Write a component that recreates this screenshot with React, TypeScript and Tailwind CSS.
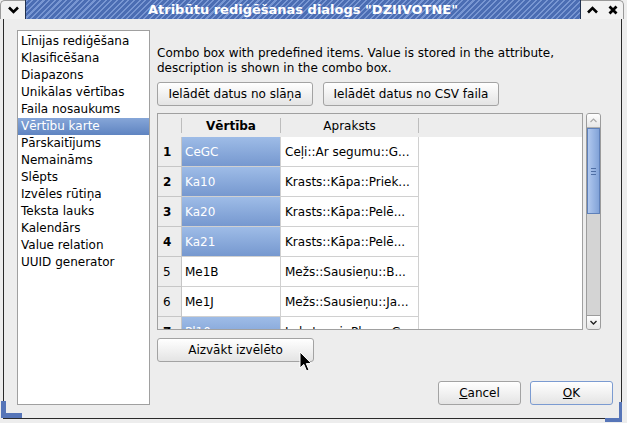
import React from "react";

const kinds = [
  "Līnijas rediģēšana",
  "Klasificēšana",
  "Diapazons",
  "Unikālas vērtības",
  "Faila nosaukums",
  "Vērtību karte",
  "Pārskaitījums",
  "Nemaināms",
  "Slēpts",
  "Izvēles rūtiņa",
  "Teksta lauks",
  "Kalendārs",
  "Value relation",
  "UUID generator",
];

const rows = [
  { n: 1, value: "CeGC", desc: "Ceļi::Ar segumu::G...", sel: true },
  { n: 2, value: "Ka10", desc: "Krasts::Kāpa::Priek...", sel: true },
  { n: 3, value: "Ka20", desc: "Krasts::Kāpa::Pelē...", sel: true },
  { n: 4, value: "Ka21", desc: "Krasts::Kāpa::Pelē...", sel: true },
  { n: 5, value: "Me1B", desc: "Mežs::Sausieņu::B...", sel: false },
  { n: 6, value: "Me1J", desc: "Mežs::Sausieņu::Ja...", sel: false },
  { n: 7, value: "Pl10", desc: "Lakstaugi::Plava::G...", sel: true },
];

function GtkButton({
  children,
  className = "",
  focused = false,
}: {
  children: React.ReactNode;
  className?: string;
  focused?: boolean;
}) {
  return (
    <div
      className={`flex items-center justify-center rounded-[3px] border bg-gradient-to-b from-white to-[#e4e4e4] text-[12px] text-black ${
        focused ? "border-[#7b9bd1]" : "border-[#a3a3a3]"
      } ${className}`}
    >
      {children}
    </div>
  );
}

function TitleBar() {
  return (
    <div className="flex h-[19px] shrink-0">
      <div className="flex w-[25px] items-center justify-center rounded-tl-[5px] border-l border-t border-[#9a9a9a] bg-[#f2f2f2]">
        <svg width="11" height="8" viewBox="0 0 11 8">
          <path d="M1 1.5 L5.5 6 L10 1.5" fill="none" stroke="#000" strokeWidth="2.6" />
        </svg>
      </div>
      <div className="flex flex-1 items-center justify-center border-x border-[#22324f] bg-[repeating-linear-gradient(135deg,#7896d2_0px,#7896d2_1.5px,#4b6db3_1.5px,#4b6db3_4px)]">
        <span className="font-['DejaVu_Sans'] text-[13px] font-bold text-white">
          Atribūtu rediģēšanas dialogs "DZIIVOTNE"
        </span>
      </div>
      <div className="flex w-[22px] items-center justify-center border-t border-[#9a9a9a] bg-[#f2f2f2]">
        <svg width="11" height="8" viewBox="0 0 11 8">
          <path d="M1 6.5 L5.5 2 L10 6.5" fill="none" stroke="#000" strokeWidth="2.6" />
        </svg>
      </div>
      <div className="flex w-[21px] items-center justify-center rounded-tr-[5px] border-r border-t border-[#9a9a9a] bg-[#f2f2f2]">
        <svg width="10" height="10" viewBox="0 0 10 10">
          <path d="M1.5 1.5 L8.5 8.5 M8.5 1.5 L1.5 8.5" stroke="#000" strokeWidth="2.8" />
        </svg>
      </div>
      <div className="w-[3px]" />
    </div>
  );
}

function KindList() {
  return (
    <div className="mt-[11px] h-[375px] w-[133px] shrink-0 border border-[#a0a0a0] bg-white pt-[2px]">
      {kinds.map((k) => {
        const active = k === "Vērtību karte";
        return (
          <div
            key={k}
            className={`h-[17px] pl-[3px] text-[12px] leading-[17px] ${
              active ? "bg-gradient-to-b from-[#86a6d8] to-[#5f84c1] text-white" : "text-black"
            }`}
          >
            {k}
          </div>
        );
      })}
    </div>
  );
}

function ScrollBar() {
  return (
    <div className="ml-[3px] flex h-[217px] w-[15px] flex-col overflow-hidden rounded-[3px] border border-[#9c9c9c] bg-[#d4d4d4]">
      <div className="flex h-[14px] items-center justify-center border-b border-[#b0b0b0] bg-gradient-to-b from-white to-[#e6e6e6]">
        <svg width="7" height="5" viewBox="0 0 7 5">
          <path d="M0.5 4 L3.5 1 L6.5 4" fill="none" stroke="#aaa" strokeWidth="1.2" />
        </svg>
      </div>
      <div className="flex h-[86px] items-center justify-center border border-[#5e80b9] bg-gradient-to-r from-[#b0c8ee] to-[#82a3d8]">
        <div className="flex w-[5px] flex-col gap-[2px]">
          <div className="h-px bg-[#4e6ea4]" />
          <div className="h-px bg-[#4e6ea4]" />
          <div className="h-px bg-[#4e6ea4]" />
        </div>
      </div>
      <div className="flex-1" />
      <div className="flex h-[14px] items-center justify-center border-t border-[#9c9c9c] bg-gradient-to-b from-white to-[#e6e6e6]">
        <svg width="7" height="5" viewBox="0 0 7 5">
          <path d="M0.5 1 L3.5 4 L6.5 1" fill="none" stroke="#222" strokeWidth="1.4" />
        </svg>
      </div>
    </div>
  );
}

function ValueTable() {
  return (
    <div className="flex">
      <div className="h-[217px] w-[426px] overflow-hidden border border-[#a0a0a0] bg-white">
        <div className="flex h-[23px] bg-[#ededed]">
          <div className="flex w-[24px] items-center justify-end py-[4px]">
            <div className="h-full w-px bg-[#bdbdbd]" />
          </div>
          <div className="flex w-[99px] items-center py-[4px]">
            <span className="flex-1 text-center text-[12px] font-bold">Vērtība</span>
            <div className="h-full w-px bg-[#bdbdbd]" />
          </div>
          <div className="flex w-[138px] items-center py-[4px]">
            <span className="flex-1 text-center text-[12px]">Apraksts</span>
            <div className="h-full w-px bg-[#bdbdbd]" />
          </div>
        </div>
        {rows.map((r) => (
          <div key={r.n} className="flex h-[30px] shrink-0">
            <div className="flex w-[24px] items-center border-b border-r border-[#c6c6c6] bg-[#ededed] pl-[5px] text-[12px]">
              <span className={r.sel ? "font-bold" : ""}>{r.n}</span>
            </div>
            <div
              className={`flex w-[99px] items-center border-b border-r border-[#d0d0d0] pl-[3px] text-[12px] ${
                r.sel ? "bg-gradient-to-b from-[#9ebce7] to-[#7698cf] text-white" : "text-black"
              }`}
            >
              {r.value}
            </div>
            <div className="flex w-[138px] items-center border-b border-r border-[#d0d0d0] pl-[4px] text-[12px] text-black">
              {r.desc}
            </div>
          </div>
        ))}
      </div>
      <ScrollBar />
    </div>
  );
}

function Cursor() {
  return (
    <svg className="absolute left-[299px] top-[351px]" width="14" height="22" viewBox="0 0 14 22">
      <path
        d="M1 1 L1 17 L4.8 13.4 L7.6 20 L10 19 L7.3 12.6 L12.5 12.6 Z"
        fill="#000"
        stroke="#fff"
        strokeWidth="1"
        strokeLinejoin="round"
      />
    </svg>
  );
}

export default function App() {
  return (
    <div className="relative h-[423px] w-[627px] overflow-hidden bg-[#ededed] font-['DejaVu_Sans',sans-serif] text-black">
      <TitleBar />
      <div className="ml-[3px] mr-[5px] flex h-[400px] border-x border-b border-[#2a2a2a] bg-[#ededed] pl-[13px]">
        <KindList />
        <div className="ml-[7px] flex flex-1 flex-col">
          <p className="mt-[27px] text-[12px] leading-[15px]">
            Combo box with predefined items. Value is stored in the attribute,
            <br />
            description is shown in the combo box.
          </p>
          <div className="mt-[6px] flex gap-[10px]">
            <GtkButton className="h-[24px] w-[156px]">Ielādēt datus no slāņa</GtkButton>
            <GtkButton className="h-[24px] w-[176px]">Ielādēt datus no CSV faila</GtkButton>
          </div>
          <div className="mt-[7px]">
            <ValueTable />
          </div>
          <GtkButton className="mt-[8px] h-[24px] w-[157px]">Aizvākt izvēlēto</GtkButton>
          <div className="mr-[8px] mt-[19px] flex justify-end gap-[9px]">
            <GtkButton className="h-[24px] w-[83px]">
              <span>
                <span className="underline">C</span>ancel
              </span>
            </GtkButton>
            <GtkButton focused className="h-[24px] w-[83px]">
              <span>
                <span className="underline">O</span>K
              </span>
            </GtkButton>
          </div>
        </div>
      </div>
      {/* resize handles in the frame corners */}
      <div className="absolute left-[1px] top-[401px] h-[17px] w-[5px] bg-[#5675b8]" />
      <div className="absolute left-[1px] top-[413px] h-[5px] w-[21px] bg-[#5675b8]" />
      <div className="absolute left-[619px] top-[402px] h-[20px] w-[3px] bg-[#5675b8]" />
      <div className="absolute left-[605px] top-[418px] h-[4px] w-[17px] bg-[#5675b8]" />
      <Cursor />
    </div>
  );
}
